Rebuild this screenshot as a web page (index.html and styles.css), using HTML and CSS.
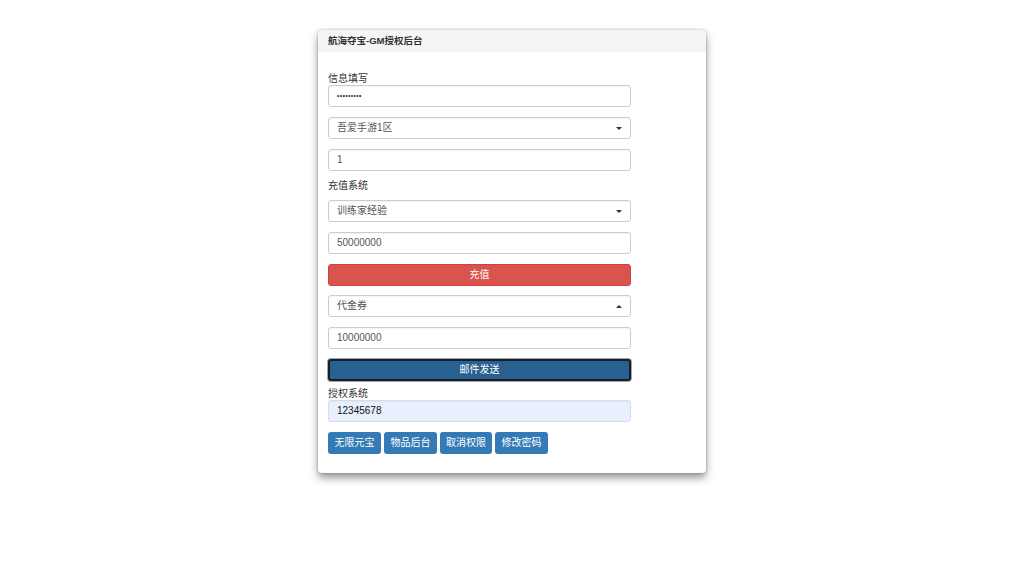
FILE: index.html
```html
<!DOCTYPE html>
<html lang="zh">
<head>
<meta charset="utf-8">
<title>航海夺宝-GM授权后台</title>
<link rel="stylesheet" href="styles.css">
</head>
<body>
<div class="panel">
  <div class="panel-heading">航海夺宝-GM授权后台</div>
  <div class="panel-body">
    <div class="label label-first">信息填写</div>
    <div class="field field-pw">•••••••••</div>
    <div class="field select">吾爱手游1区<span class="caret"></span></div>
    <div class="field">1</div>
    <div class="label label-mid">充值系统</div>
    <div class="field select">训练家经验<span class="caret"></span></div>
    <div class="field">50000000</div>
    <div class="btn btn-danger">充值</div>
    <div class="field select">代金券<span class="caret caret-up"></span></div>
    <div class="field">10000000</div>
    <div class="btn btn-primary-focus">邮件发送</div>
    <div class="label label-tight">授权系统</div>
    <div class="field field-autofill">12345678</div>
    <div class="btn-row">
      <div class="btn-sm">无限元宝</div>
      <div class="btn-sm">物品后台</div>
      <div class="btn-sm">取消权限</div>
      <div class="btn-sm">修改密码</div>
    </div>
  </div>
</div>
</body>
</html>
```
FILE: styles.css
```css
html, body {
  margin: 0;
  padding: 0;
  background: #fff;
}
body {
  font-family: "Liberation Sans", "Noto Sans CJK SC", sans-serif;
  font-size: 10px;
  color: #333;
  padding-top: 30px;
  min-height: 100vh;
  box-sizing: border-box;
}
.panel {
  width: 388px;
  height: 443px;
  margin: 0 auto;
  background: #fff;
  border-radius: 4px;
  box-shadow: 0 5px 9px rgba(0, 0, 0, 0.4), 0 0 3px rgba(0, 0, 0, 0.25);
  overflow: hidden;
  box-sizing: border-box;
}
.panel-heading {
  height: 22px;
  line-height: 22px;
  padding-left: 10px;
  background: #f5f5f5;
  box-sizing: border-box;
  font-weight: bold;
  font-size: 9.5px;
  color: #333;
}
.panel-body {
  padding: 20px 10px 0 10px;
  display: flex;
  flex-direction: column;
  align-items: flex-start;
}
.label {
  line-height: 12px;
  height: 12px;
  color: #333;
}
.label-first { margin-top: 1px; }
.label-mid { margin-top: -1px; margin-bottom: 8px; }
.label-tight { margin-top: 7px; }
.field {
  width: 303px;
  height: 22px;
  box-sizing: border-box;
  border: 1px solid #ccc;
  border-radius: 3px;
  padding: 0 8px;
  line-height: 20px;
  color: #555;
  background: #fff;
  margin-bottom: 10px;
  position: relative;
  box-shadow: inset 0 1px 1px rgba(0, 0, 0, 0.04);
}
.field-pw {
  font-size: 7px;
  letter-spacing: 0.3px;
  color: #333;
}
.field-autofill {
  background: #e8f0fe;
  color: #111;
  border-color: #d6dde8;
}
.caret {
  position: absolute;
  right: 8px;
  top: 9px;
  width: 0;
  height: 0;
  border-left: 3px solid transparent;
  border-right: 3px solid transparent;
  border-top: 3px solid #333;
}
.caret-up {
  border-top: none;
  border-bottom: 3px solid #333;
}
.btn {
  width: 303px;
  height: 22px;
  box-sizing: border-box;
  border-radius: 3px;
  text-align: center;
  color: #fff;
  line-height: 22px;
  margin-bottom: 9px;
}
.btn-danger {
  background: #d9534f;
  border: 1px solid #d43f3a;
  line-height: 20px;
}
.btn-primary-focus {
  background: #286090;
  border: 2px solid #1b1f24;
  line-height: 18px;
  box-shadow: 0 0 0 1px #9aa7b4;
  margin-bottom: 0;
}
.btn-row {
  display: flex;
  gap: 3px;
}
.btn-sm {
  height: 22px;
  line-height: 22px;
  padding: 0;
  background: #337ab7;
  color: #fff;
  border-radius: 3px;
  box-sizing: border-box;
  width: 53px;
  text-align: center;
  white-space: nowrap;
}
.btn-sm:nth-child(3) { width: 52px; }
```
